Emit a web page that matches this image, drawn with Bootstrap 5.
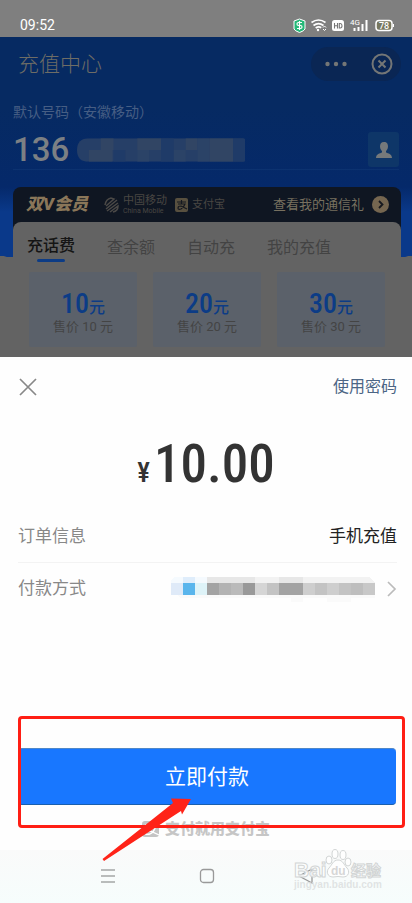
<!DOCTYPE html>
<html lang="zh-CN">
<head>
<meta charset="utf-8">
<meta name="viewport" content="width=device-width, initial-scale=1">
<title>充值中心</title>
<link href="https://cdn.jsdelivr.net/npm/bootstrap@5.3.0/dist/css/bootstrap.min.css" rel="stylesheet">
<style>
body{font-family:Roboto,"Noto Sans CJK SC",sans-serif;background:#fefefe;color:#333;line-height:1.5}
svg{display:block;flex:none}
button{border:0;background:none;padding:0}
.statusbar{background:#7f7f7f;height:37px;padding:12px 18px 0 20px;color:#fff;font-size:14px;line-height:26px}
.backdrop-page{background:radial-gradient(ellipse 60% 20px at 50% 208px,#0a398a 99%,transparent 100%),linear-gradient(#062a62 0,#062a62 70px,#05296a 150px,#0a398a 175px,#0a398a 208px,#636363 208px);color:#7d828a}
.topbar{height:54px;padding:0 11px 0 18px}
.page-title{font-size:21px;line-height:56px;color:#6e6d66;font-weight:300}
.capsule{background:#0a2654;border-radius:17px;height:34px;gap:24px;padding:0 8px 0 14px}
.account{padding:0 13px;height:96px}
.acct-label{font-size:14px;line-height:20px;padding-top:11px;color:#465e84}
.acct-num{font-size:33px;line-height:34px;font-weight:500;color:#7c8084}
.acct-row{height:40px;margin-top:8px;border-bottom:1px solid #0c3270}
.contact{background:#0e3668;width:31px;height:35px;border-radius:3px}
.vip{margin:0 11px 0 13px;background:#0f1622;border-radius:8px 8px 0 0}
.vip-head{height:35px;padding:0 12px 0 13px;color:#7c7263}
.vip-name{font-size:17px;font-weight:900;font-style:italic;color:#8a7659;line-height:35px}
.partner{font-size:11px;line-height:13px;color:#494642}
.partner small{display:block;font-size:7px;line-height:8px}
.gift{font-size:13px;color:#77705f}
.panel{background:#636363;border-radius:8px 8px 0 0;height:135px;padding:0 16px}
.tabs{gap:32px;margin-left:-2px;height:50px}
.tabs button{font-size:16px;line-height:24px;padding:12px 0 0;color:#434343;height:40px}
.tabs .on{color:#151515;font-weight:500}
.tabs .on::after{content:"";display:block;width:28px;height:3px;border-radius:2px;background:#0d3c85;margin:1px auto 0}
.tiles{gap:16px}
.tile{background:#5b616a;height:75px;flex:1;color:#444;border-radius:2px;padding:16px 0 0}
.tile b{height:30px;font-size:28px;line-height:32px;font-weight:500;color:#0c3c86;font-family:"Roboto Condensed","Liberation Sans Narrow",Roboto,"Noto Sans CJK SC",sans-serif}
.tile b i{font-size:16px;font-style:normal}
.tile span{font-size:13px;line-height:18px}
.sheet-head{padding:18px 15px 0 18px}
.pwd{font-size:16px;line-height:24px;color:#4c6585;text-decoration:none}
.amount{height:104px;padding-top:33px;line-height:64px;color:#333;font-family:"Roboto Condensed","Liberation Sans Narrow",Roboto,sans-serif;font-weight:500;font-size:53px}
.amount span{font-size:27px;margin-right:4px}
.line-item{margin:0 15px 0 18px;height:52px;font-size:17px;color:#888}
.line-item strong{font-weight:400;color:#222}
.first{border-bottom:1px solid #f3f3f3}
.pay-zone{margin:101px 7px 0 18px;height:112px}
.pay-zone .pay{margin-top:32px;width:calc(100% - 9px);height:57px;background:#1877ff;color:#fff;font-size:21px;line-height:24px;border-radius:4px;border-top:1px solid #4f87c8;border-bottom:1px solid #195fae}
.highlight{inset:0;border:3px solid #ff1e14;border-radius:4px;pointer-events:none}
.slogan{margin-top:-9px;font-size:15px;line-height:20px;font-weight:900;color:#c6c6c6;gap:6px}
.arrow{left:84px;top:82px}
.sysbar{margin-top:11px;height:53px;background:linear-gradient(#fafafa,#f6fdfc);padding:0 97px 2px 99px}
.mark-logo{right:25px;top:-2px}
</style>
</head>
<body>
<div class="statusbar d-flex justify-content-between">
  <span>09:52</span>
  <svg width="104" height="26" viewBox="290 12 104 26" fill="none" stroke="#fff">
    <path d="M299.500 19l5.500 2v8q-1 2-5.500 3.500q-4.500-1.500-5.500-3.500v-8z" fill="#25b878"/>
    <path d="M302 22.500h-3.500q-1.500 0-1.500 1.500t1.500 1.500h2q1.500 0 1.500 1.500t-1.500 1.500h-3.500M299.500 21v9" stroke-width="1.200"/>
    <path d="M311.500 22.500q7-5 14 0M313.500 25.500q5-3.800 10 0M315.700 28q3-2.200 5.500-.3" stroke-width="1.700"/>
    <circle cx="318" cy="30" r="1.200" fill="#fff" stroke="none"/><path d="M323 27.500l1.500-1.500 1.500 1.500M323 29l1.500 1.500 1.500-1.500" stroke-width="1"/>
    <rect x="332" y="20" width="12" height="11" rx="2.500" fill="#fff" stroke="none"/>
    <path d="M334.500 23v5.500M337.500 23v5.500M334.500 25.700h3M339.300 23.500v4.500h1q1.700 0 1.700-2.200t-1.700-2.300z" stroke="#777" stroke-width="1.100"/>
    <text x="350" y="25" font-size="8" fill="#fff" stroke="none">4G</text>
    <path d="M354.500 28v3M358.500 27v4M362.500 24v7M366.500 20v11" stroke-width="2"/>
    <rect x="376" y="20.500" width="16" height="10" rx="3" fill="#77775f" stroke-width="1.500"/><path d="M393.500 24v3" stroke-width="1.500"/>
    <text x="384" y="29" font-size="9" font-weight="500" text-anchor="middle" fill="#fff" stroke="none">78</text>
  </svg>
</div>

<div class="backdrop-page">
  <header class="topbar d-flex justify-content-between align-items-center">
    <span class="page-title">充值中心</span>
    <div class="capsule d-flex align-items-center">
      <button aria-label="更多"><svg width="22" height="6" fill="#747676"><circle cx="2.500" cy="3" r="2.200"/><circle cx="11" cy="3" r="2.200"/><circle cx="19.500" cy="3" r="2.200"/></svg></button>
      <button aria-label="关闭小程序"><svg width="22" height="22" fill="none" stroke="#747676" stroke-width="2"><circle cx="11" cy="11" r="9.500"/><path d="M7.500 7.500l7 7M14.500 7.500l-7 7"/></svg></button>
    </div>
  </header>
  <section class="account">
    <div class="acct-label">默认号码（安徽移动）</div>
    <div class="acct-row d-flex align-items-center">
      <span class="acct-num">136</span>
      <svg class="ms-2" width="168" height="26" viewBox="0 0 170 26">
        <defs><clipPath id="pill"><path d="M12 1h156q2 0 2 2v20q0 2-2 2H12Q0 25 0 13T12 1z"/></clipPath></defs>
        <g clip-path="url(#pill)"><path fill="#263f67" d="M0 0h170v26H0z"/>
        <path fill="#314564" d="M24 0h13v13H24zM61 0h24v13H61zM110 0h12v13h-12zM12 13h24v13H12zM134 0h24v26h-24z"/>
        <path fill="#1f3b68" d="M37 13h12v13H37zM85 0h13v26H85zM158 0h12v26h-12z"/>
        <path fill="#2b4367" d="M98 13h12v13H98zM61 13h12v13H61zM122 0h12v26h-12z"/></g>
      </svg>
      <button class="contact ms-auto d-flex align-items-center justify-content-center" aria-label="通讯录"><svg width="16" height="18" fill="#75797b"><path d="M8 1c3 0 4 2 4 4.500S10.500 9.500 10 10v1.500c2 .8 6 1.500 6 5.500H0c0-4 4-4.700 6-5.500V10C5.500 9.500 4 8 4 5.500S5 1 8 1z"/></svg></button>
    </div>
  </section>
  <section class="vip">
    <div class="vip-head d-flex align-items-center">
      <span class="vip-name">双V会员</span>
      <svg class="ms-3 me-1" width="15" height="16" fill="none" stroke="#4b4947" stroke-width="1.500"><path d="M1 8q1-6 6-7l3 1-8 7M2 12L13 3M3 14L14 6M6 15l8-6q0 5-5 6"/></svg>
      <span class="partner">中国移动<small>China Mobile</small></span>
      <svg class="ms-2 me-1" width="13" height="14" viewBox="0 0 13 14"><rect width="13" height="14" rx="2" fill="#58503f"/><path d="M2 4h9M6.500 2v4M3 6h7q-1 3-4 5-3 1-3-1t3-2l6 3" fill="none" stroke="#151820" stroke-width="1.200"/></svg>
      <span class="partner">支付宝</span>
      <a href="#" class="gift ms-auto d-flex align-items-center gap-2 text-decoration-none">查看我的通信礼
        <svg width="17" height="17" fill="none"><circle cx="8.500" cy="8.500" r="8.500" fill="#756650"/><path d="M7 5l3.500 3.500L7 12" stroke="#17191f" stroke-width="1.800"/></svg></a>
    </div>
    <div class="panel">
      <nav class="tabs d-flex">
        <button class="on">充话费</button><button>查余额</button><button>自动充</button><button>我的充值</button>
      </nav>
      <div class="tiles d-flex">
        <button class="tile d-flex flex-column align-items-center"><b>10<i>元</i></b><span>售价 10 元</span></button>
        <button class="tile d-flex flex-column align-items-center"><b>20<i>元</i></b><span>售价 20 元</span></button>
        <button class="tile d-flex flex-column align-items-center"><b>30<i>元</i></b><span>售价 30 元</span></button>
      </div>
    </div>
  </section>
</div>

<main>
  <div class="sheet-head d-flex justify-content-between align-items-center">
    <button aria-label="关闭"><svg width="20" height="20" stroke="#888" stroke-width="1.700"><path d="M2 2l16 16M18 2L2 18"/></svg></button>
    <a href="#" class="pwd">使用密码</a>
  </div>
  <div class="amount text-center"><span>¥</span>10.00</div>
  <div class="pt-2">
    <div class="line-item first d-flex justify-content-between align-items-center"><span>订单信息</span><strong>手机充值</strong></div>
    <div class="line-item d-flex align-items-center"><span class="me-auto">付款方式</span>
      <svg width="206" height="26" viewBox="0 0 206 26" shape-rendering="crispEdges">
        <path fill="#f5fafe" d="M4 1h8v6H0V4zM24 1h12v6H24z"/><path fill="#dfedfb" d="M12 1h12v6H12z"/>
        <path fill="#e7e7e7" d="M36 1h48v6H36zM108 1h24v6h-24z"/><path fill="#f2f2f2" d="M84 1h24v6H84zM132 1h66l6 6h-72z"/>
        <path fill="#dfeaf8" d="M0 7h12v12H0z"/><path fill="#5ab5ec" d="M12 7h12v12H12z"/><path fill="#def3f8" d="M24 7h12v12H24z"/>
        <path fill="#a3a3a3" d="M36 7h12v12H36zM108 7h24v12h-24z"/><path fill="#b3b3b3" d="M48 7h12v12H48z"/><path fill="#bababa" d="M60 7h12v12H60z"/><path fill="#999" d="M72 7h12v12H72z"/>
        <path fill="#d5d5d5" d="M84 7h12v12H84z"/><path fill="#c3c3c3" d="M96 7h12v12H96zM144 7h12v12h-12zM168 7h12v12h-12z"/><path fill="#cecece" d="M132 7h12v12h-12zM156 7h12v12h-12z"/><path fill="#bebebe" d="M180 7h12v12h-12z"/><path fill="#c8c8c8" d="M192 7h12v12h-12z"/>
        <path fill="#fafafa" d="M6 19h198v3h-24v5h-24v-5h-24v5h-12v-5H10z"/>
      </svg>
      <svg class="ms-2" width="12" height="18" fill="none" stroke="#bbb" stroke-width="1.700"><path d="M3 2l7 7-7 7"/></svg>
    </div>
  </div>
  <div class="pay-zone position-relative">
    <div class="d-flex"><button class="pay">立即付款</button></div>
    <div class="highlight position-absolute"></div>
    <svg class="arrow position-absolute z-1" width="92" height="64" viewBox="0 0 92 64"><path fill="#ff2318" d="M.5 61L71 5 69 .500 89 1 80 16.500 79 13 2 63z"/></svg>
  </div>
  <div class="slogan d-flex justify-content-center align-items-center">
    <svg width="17" height="16" viewBox="0 0 17 16"><rect width="17" height="16" rx="3" fill="#c4c4c4"/><path d="M3 4h11M8.500 2v5M4 7h9q-1 4-5 6-5 1-5-1t5-2l9 4" fill="none" stroke="#fff" stroke-width="1.300"/></svg>
    <span>支付就用支付宝</span>
  </div>
</main>
<footer class="sysbar position-relative d-flex justify-content-between align-items-center">
  <button aria-label="最近任务"><svg width="18" height="18" stroke="#a4a6a6" stroke-width="1.300"><path d="M2 3h14M2 9h14M2 15h14"/></svg></button>
  <button aria-label="主页"><svg width="16" height="16" fill="none" stroke="#999" stroke-width="1.300"><rect x="1.500" y="1.500" width="13" height="13" rx="3"/></svg></button>
  <button aria-label="返回"><svg width="18" height="18" fill="none" stroke="#999" stroke-width="1.300"><path d="M15 2v14L2 9z"/></svg></button>
  <svg class="mark-logo position-absolute" width="94" height="44" viewBox="0 0 94 44" font-family="Liberation Sans,Noto Sans CJK SC,sans-serif" font-weight="700" fill="#fff" fill-opacity=".8" stroke="#d2d5d5" stroke-width="1">
    <text x="1" y="29" font-size="21">Bai</text>
    <ellipse cx="36" cy="12" rx="3" ry="4"/><ellipse cx="42" cy="6" rx="3" ry="4.500"/><ellipse cx="50" cy="7" rx="3" ry="4.500"/><ellipse cx="55" cy="14" rx="3" ry="4"/>
    <path d="M45 12c5 0 6 5 9 8s2 9-4 9q-5-1-10 0c-6 0-7-6-4-9s4-8 9-8z"/>
    <text x="38" y="27" font-size="12" fill="#ccc" stroke="none">du</text>
    <text x="58" y="28" font-size="15">经验</text>
    <text x="1" y="40" font-size="10" fill="#dadddd" stroke="none">jingyan.baidu.com</text>
  </svg>
</footer>
<script src="https://cdn.jsdelivr.net/npm/bootstrap@5.3.0/dist/js/bootstrap.bundle.min.js"></script>
</body>
</html>
